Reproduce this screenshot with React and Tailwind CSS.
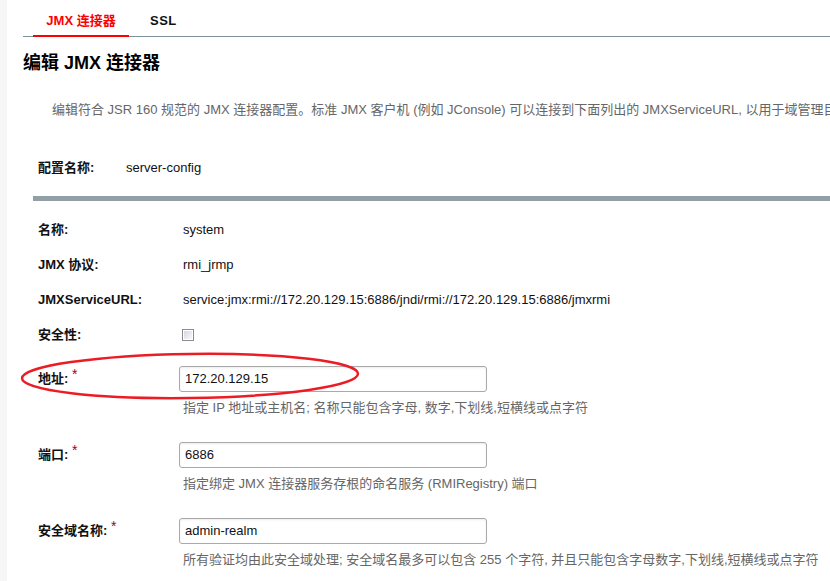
export default function App() {
  const fieldRows = [
    { label: "名称:", value: "system" },
    { label: "JMX 协议:", value: "rmi_jrmp" },
    {
      label: "JMXServiceURL:",
      value: "service:jmx:rmi://172.20.129.15:6886/jndi/rmi://172.20.129.15:6886/jmxrmi",
    },
  ];

  const inputRows = [
    {
      label: "地址:",
      value: "172.20.129.15",
      hint: "指定 IP 地址或主机名; 名称只能包含字母, 数字,下划线,短横线或点字符",
    },
    {
      label: "端口:",
      value: "6886",
      hint: "指定绑定 JMX 连接器服务存根的命名服务 (RMIRegistry) 端口",
    },
    {
      label: "安全域名称:",
      value: "admin-realm",
      hint: "所有验证均由此安全域处理; 安全域名最多可以包含 255 个字符, 并且只能包含字母数字,下划线,短横线或点字符",
    },
  ];

  return (
    <div className="relative flex min-h-screen w-full overflow-hidden bg-white font-['Liberation_Sans','Noto_Sans_CJK_SC',sans-serif] text-[13px] leading-[16px] text-[#111]">
      <div className="w-[7px] shrink-0 bg-[#f6f6f6]" />

      <div className="min-w-0 flex-1 pl-[16px]">
        {/* tabs */}
        <div className="flex h-[37px] items-start border-b border-[#7f939d]">
          <div className="-mb-px ml-[10px] flex h-[37px] w-[96px] justify-center border-b-2 border-[#f00] pt-[13px] font-bold text-[#f00]">
            JMX 连接器
          </div>
          <div className="pl-[21px] pt-[13px] font-bold tracking-[0.5px] text-[#111]">SSL</div>
        </div>

        <h1 className="mt-[14px] text-[18px] font-bold leading-[24px] text-black">编辑 JMX 连接器</h1>

        <div className="mt-[27px] overflow-hidden pl-[29px]">
          <p className="whitespace-nowrap text-[#666]">
            编辑符合 JSR 160 规范的 JMX 连接器配置。标准 JMX 客户机 (例如 JConsole) 可以连接到下面列出的 JMXServiceURL, 以用于域管理目的。
          </p>
        </div>

        <div className="mt-[42px] flex pl-[15px]">
          <span className="w-[88px] font-bold">配置名称:</span>
          <span>server-config</span>
        </div>

        <div className="ml-[10px] mt-[20px] h-[5px] bg-[#929fa6]" />

        <div className="mt-[11px] pl-[15px]">
          {fieldRows.map((r) => (
            <div key={r.label} className="flex h-[35px] items-center">
              <span className="w-[141px] shrink-0 font-bold">{r.label}</span>
              <span className="whitespace-nowrap pl-[4px]">{r.value}</span>
            </div>
          ))}
          <div className="flex h-[35px] items-center">
            <span className="w-[141px] shrink-0 font-bold">安全性:</span>
            <span className="ml-[3px] flex h-[12px] w-[12px] border border-[#8c8c8c] bg-white p-px">
              <span className="h-full w-full bg-gradient-to-br from-[#d5d9e2] to-[#f8f8fa]" />
            </span>
          </div>

          {inputRows.map((r, i) => (
            <div key={r.label} className={i === 0 ? "mt-[14px]" : "mt-[26px]"}>
              <div className="flex items-start">
                <span className="w-[141px] shrink-0 pt-[4px] font-bold">
                  {r.label}{" "}
                  <span className="relative -top-[4px] text-[14px] font-normal text-[#a0001c]">*</span>
                </span>
                <div className="flex h-[26px] w-[308px] items-center rounded-[3px] border border-[#a9a9a9] px-[5px] text-[#111] shadow-[inset_0_1px_2px_rgba(0,0,0,0.08)]">
                  {r.value}
                </div>
              </div>
              <p className="mt-[8px] whitespace-nowrap pl-[145px] text-[#666]">{r.hint}</p>
            </div>
          ))}
        </div>
      </div>

      {/* red highlight around the address row */}
      <svg
        className="pointer-events-none absolute left-[18px] top-[350px]"
        width="346"
        height="52"
        viewBox="0 0 346 52"
      >
        <ellipse
          cx="172"
          cy="26"
          rx="168"
          ry="22"
          transform="rotate(-0.8 172 26)"
          fill="none"
          stroke="#ec1c24"
          strokeWidth="2.5"
        />
      </svg>
    </div>
  );
}
